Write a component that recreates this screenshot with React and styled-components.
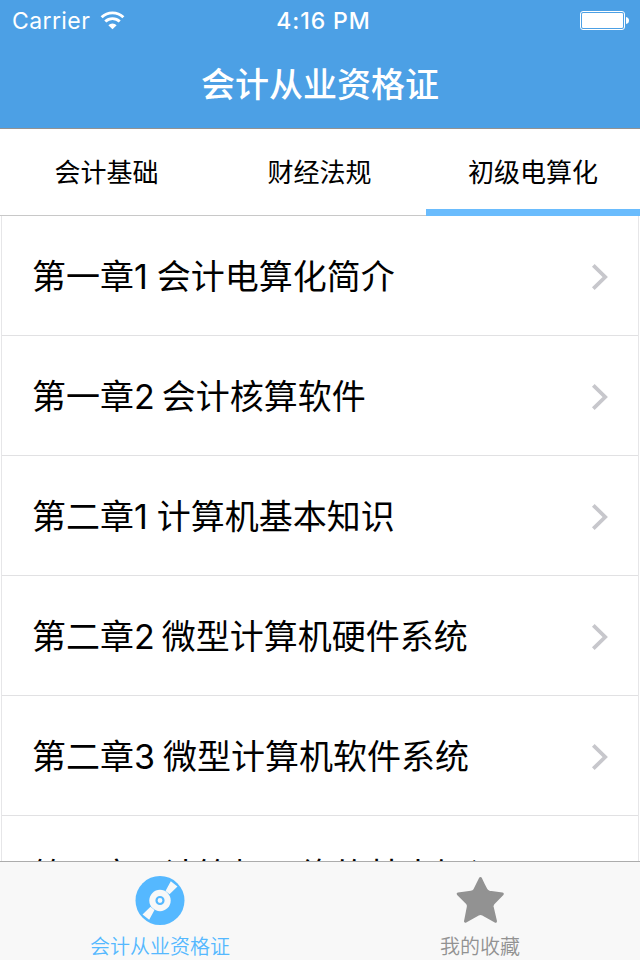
import React, { useState } from "react";
import styled, { createGlobalStyle } from "styled-components";

const tabs = ["会计基础", "财经法规", "初级电算化"];

const chapters = [
   { number: "第一章1", title: "会计电算化简介", gap: 9 },
   { number: "第一章2", title: "会计核算软件", gap: 7 },
   { number: "第二章1", title: "计算机基本知识", gap: 9 },
   { number: "第二章2", title: "微型计算机硬件系统", gap: 7 },
   { number: "第二章3", title: "微型计算机软件系统", gap: 8 },
   { number: "第二章4", title: "计算机网络的基本知识", gap: 7 },
];

function App() {
   const [tab, setTab] = useState(2);
   const [page, setPage] = useState(0);

   return (
      <Screen>
         <GlobalStyle />
         <Header>
            <StatusBar>
               <Carrier>
                  <span>Carrier</span>
                  <WifiIcon />
               </Carrier>
               <Time>4:16 PM</Time>
               <BatteryIcon />
            </StatusBar>
            <Title>会计从业资格证</Title>
         </Header>
         <Tabs>
            {tabs.map((name, i) => (
               <Tab key={name} $active={i === tab} onClick={() => setTab(i)}>{name}</Tab>
            ))}
         </Tabs>
         <List>
            {chapters.map(({ number, title, gap }) => (
               <Row key={number}>
                  <RowText $gap={gap}>
                     <span>{number}</span>
                     <span>{title}</span>
                  </RowText>
                  <Chevron />
               </Row>
            ))}
         </List>
         <BottomBar>
            <BottomItem $active={page === 0} onClick={() => setPage(0)}>
               <DiscIcon />
               <span>会计从业资格证</span>
            </BottomItem>
            <BottomItem $active={page === 1} onClick={() => setPage(1)}>
               <StarIcon />
               <span>我的收藏</span>
            </BottomItem>
         </BottomBar>
      </Screen>
   );
}

const WifiIcon = () => (
   <svg width="25" height="19" viewBox="0 0 26 19" fill="none" stroke="#fff">
      <path d="M1.7 6.2A16 16 0 0 1 24.3 6.2" strokeWidth="3" />
      <path d="M5.5 10.6A10.8 10.8 0 0 1 20.5 10.6" strokeWidth="3" />
      <path d="M13 18.7L8.7 14.4A6.1 6.1 0 0 1 17.3 14.4Z" fill="#fff" stroke="none" />
   </svg>
);

const BatteryIcon = () => (
   <svg width="49" height="19" viewBox="0 0 49 19">
      <rect x="0.5" y="0.5" width="44" height="18" rx="2.5" fill="none" stroke="#fff" />
      <rect x="2" y="2" width="41" height="15" rx="1.2" fill="#fff" />
      <path d="M46 6Q49 6.5 49 9.5T46 13Z" fill="#fff" />
   </svg>
);

const Chevron = () => (
   <svg width="18" height="28" viewBox="0 0 18 28" fill="none" stroke="#c7c7cc" strokeWidth="3.8">
      <path d="M2.3 2.3L14.2 14L2.3 25.7" />
   </svg>
);

const DiscIcon = () => (
   <svg width="50" height="50" viewBox="0 -0.5 50 50">
      <circle cx="25" cy="25" r="24.5" fill="currentColor" />
      <path d="M30.5 15.5L35.8 5.8L42.5 11L34.5 18.8Z M19.5 34.5L14.2 44.2L7.5 39L15.5 31.2Z" fill="#f8f8f8" />
      <circle cx="25" cy="25" r="10.7" fill="#f8f8f8" />
      <circle cx="25" cy="25" r="3.5" fill="none" stroke="currentColor" strokeWidth="2.2" />
   </svg>
);

const StarIcon = () => (
   <svg width="50" height="50" viewBox="0 0 50 50" fill="currentColor" stroke="currentColor" strokeWidth="3" strokeLinejoin="round">
      <path d="M25.5 3.5Q28 9 31 14.8Q32 16.8 34.5 17.2L47.3 18.9L38.5 28Q36.8 29.6 37.2 32L40.5 46.3L28 39.2Q25.5 38 23 39.2L10.5 46.3L13.3 32Q13.8 29.6 12.2 28L3.2 18.9L16 17.2Q18.8 16.8 19.8 14.8Z" />
   </svg>
);

const GlobalStyle = createGlobalStyle`
   * {
      box-sizing: border-box;
   }

   body {
      margin: 0;
      font-family: Inter, "Noto Sans CJK SC", sans-serif;
   }

   svg {
      display: block;
      flex-shrink: 0;
   }
`

const Screen = styled.main`
   width: 640px;
   height: 960px;
   display: grid;
   grid-template-rows: 129px 87px minmax(0, 1fr) 99px;
   overflow: hidden;
   background: #fff;
`

const Header = styled.header`
   background: #4ca0e5;
   border-bottom: 1px solid #929292;
   color: #fff;
`

const StatusBar = styled.div`
   height: 41px;
   display: grid;
   grid-template-columns: 1fr auto 1fr;
   align-items: center;
   padding: 0 11px 0 12px;

   > :last-child {
      justify-self: end;
   }
`

const Carrier = styled.div`
   display: flex;
   align-items: center;
   gap: 10px;
   font-size: 23px;
   letter-spacing: 0.4px;
`

const Time = styled.div`
   padding-left: 6px;
   font-size: 23px;
   font-weight: 550;
   letter-spacing: 0.9px;
`

const Title = styled.h1`
   margin: 0;
   height: 87px;
   font-size: 34px;
   font-weight: 500;
   line-height: 88px;
   text-align: center;
`

const Tabs = styled.nav`
   display: grid;
   grid-template-columns: 213px 213px 214px;
   border-bottom: 1px solid #c8c8c8;
`

const Tab = styled.button`
   height: 87px;
   padding: 2px 0 0;
   border: 0;
   border-bottom: 7px solid ${({ $active }) => ($active ? "#6abcfd" : "transparent")};
   background: none;
   color: #000;
   font: inherit;
   font-size: 26px;
`

const List = styled.section`
   margin: 0 1px;
   border: solid #e6e6e8;
   border-width: 0 1px;
   overflow: hidden;
`

const RowText = styled.div`
   display: flex;
   gap: ${({ $gap }) => $gap}px;
   padding-bottom: 4px;
   font-size: 34px;
   white-space: nowrap;
`

const Row = styled.div`
   height: 120px;
   display: flex;
   align-items: center;
   justify-content: space-between;
   padding: 2px 29px 0 30px;
   border-bottom: 1px solid #e1e1e3;

   &:last-child ${RowText} {
      padding-bottom: 6px;
   }
`

const BottomBar = styled.footer`
   display: grid;
   grid-template-columns: 1fr 1fr;
   border-top: 1px solid #acacac;
   background: #f8f8f8;
`

const BottomItem = styled.button`
   display: flex;
   flex-direction: column;
   align-items: center;
   gap: 7px;
   padding: 13px 0 0;
   border: 0;
   background: none;
   color: ${({ $active }) => ($active ? "#55b8ff" : "#929292")};
   font: inherit;
   font-size: 20px;
   font-weight: 350;
   line-height: 30px;
`

export default App;
